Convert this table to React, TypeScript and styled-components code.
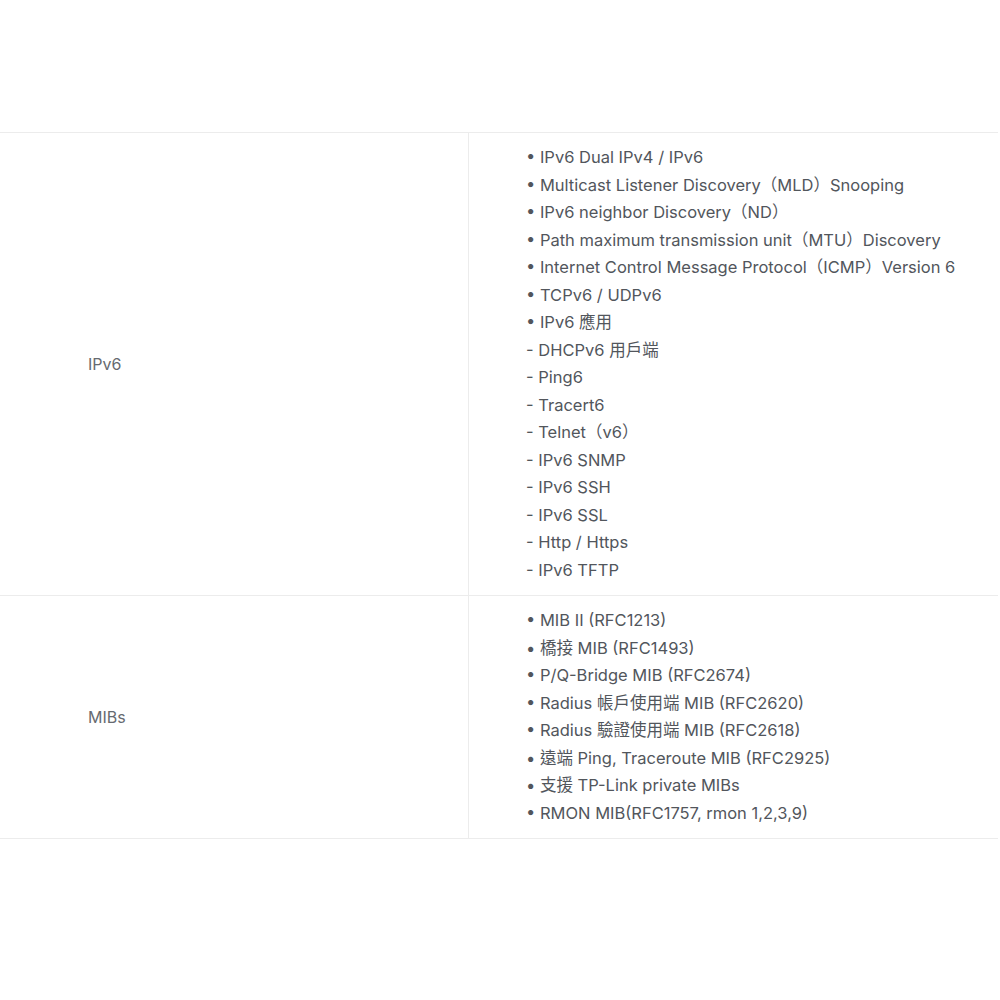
import styled, { createGlobalStyle } from "styled-components";

const GlobalStyle = createGlobalStyle`
  body {
    margin: 0;
    background: #ffffff;
    font-family: Inter, "Noto Sans CJK TC", sans-serif;
  }
`;

const specs = [
  {
    label: 'IPv6',
    items: [
      '• IPv6 Dual IPv4 / IPv6',
      '• Multicast Listener Discovery（MLD）Snooping',
      '• IPv6 neighbor Discovery（ND）',
      '• Path maximum transmission unit（MTU）Discovery',
      '• Internet Control Message Protocol（ICMP）Version 6',
      '• TCPv6 / UDPv6',
      '• IPv6 應用',
      '- DHCPv6 用戶端',
      '- Ping6',
      '- Tracert6',
      '- Telnet（v6）',
      '- IPv6 SNMP',
      '- IPv6 SSH',
      '- IPv6 SSL',
      '- Http / Https',
      '- IPv6 TFTP',
    ],
  },
  {
    label: 'MIBs',
    items: [
      '• MIB II (RFC1213)',
      '• 橋接 MIB (RFC1493)',
      '• P/Q-Bridge MIB (RFC2674)',
      '• Radius 帳戶使用端 MIB (RFC2620)',
      '• Radius 驗證使用端 MIB (RFC2618)',
      '• 遠端 Ping, Traceroute MIB (RFC2925)',
      '• 支援 TP-Link private MIBs',
      '• RMON MIB(RFC1757, rmon 1,2,3,9)',
    ],
  },
];

const App = () => {
  return (
    <>
      <GlobalStyle />
      <Page>
        <SpecTable>
          {specs.map(spec => (
            <Row key={spec.label}>
              <LabelCell>{spec.label}</LabelCell>
              <ValueCell>
                {spec.items.map((item, i) => (
                  <Line key={i}>{item}</Line>
                ))}
              </ValueCell>
            </Row>
          ))}
        </SpecTable>
      </Page>
    </>
  );
};

const Page = styled.div`
  padding-top: 132px;
  height: 1000px;
  box-sizing: border-box;
`;

const SpecTable = styled.div`
  width: 998px;
  border-top: 1px solid #ececec;
`;

const Row = styled.div`
  display: grid;
  grid-template-columns: 469px 1fr;
  border-bottom: 1px solid #ececec;
`;

const LabelCell = styled.div`
  display: flex;
  align-items: center;
  padding-left: 88px;
  border-right: 1px solid #ececec;
  font-size: 16px;
  color: #666a70;
`;

const ValueCell = styled.div`
  padding: 11px 0 11px 57px;
`;

const Line = styled.div`
  font-size: 16.5px;
  line-height: 27.5px;
  color: #52565c;
  letter-spacing: 0;
  white-space: nowrap;
`;

export default App;
